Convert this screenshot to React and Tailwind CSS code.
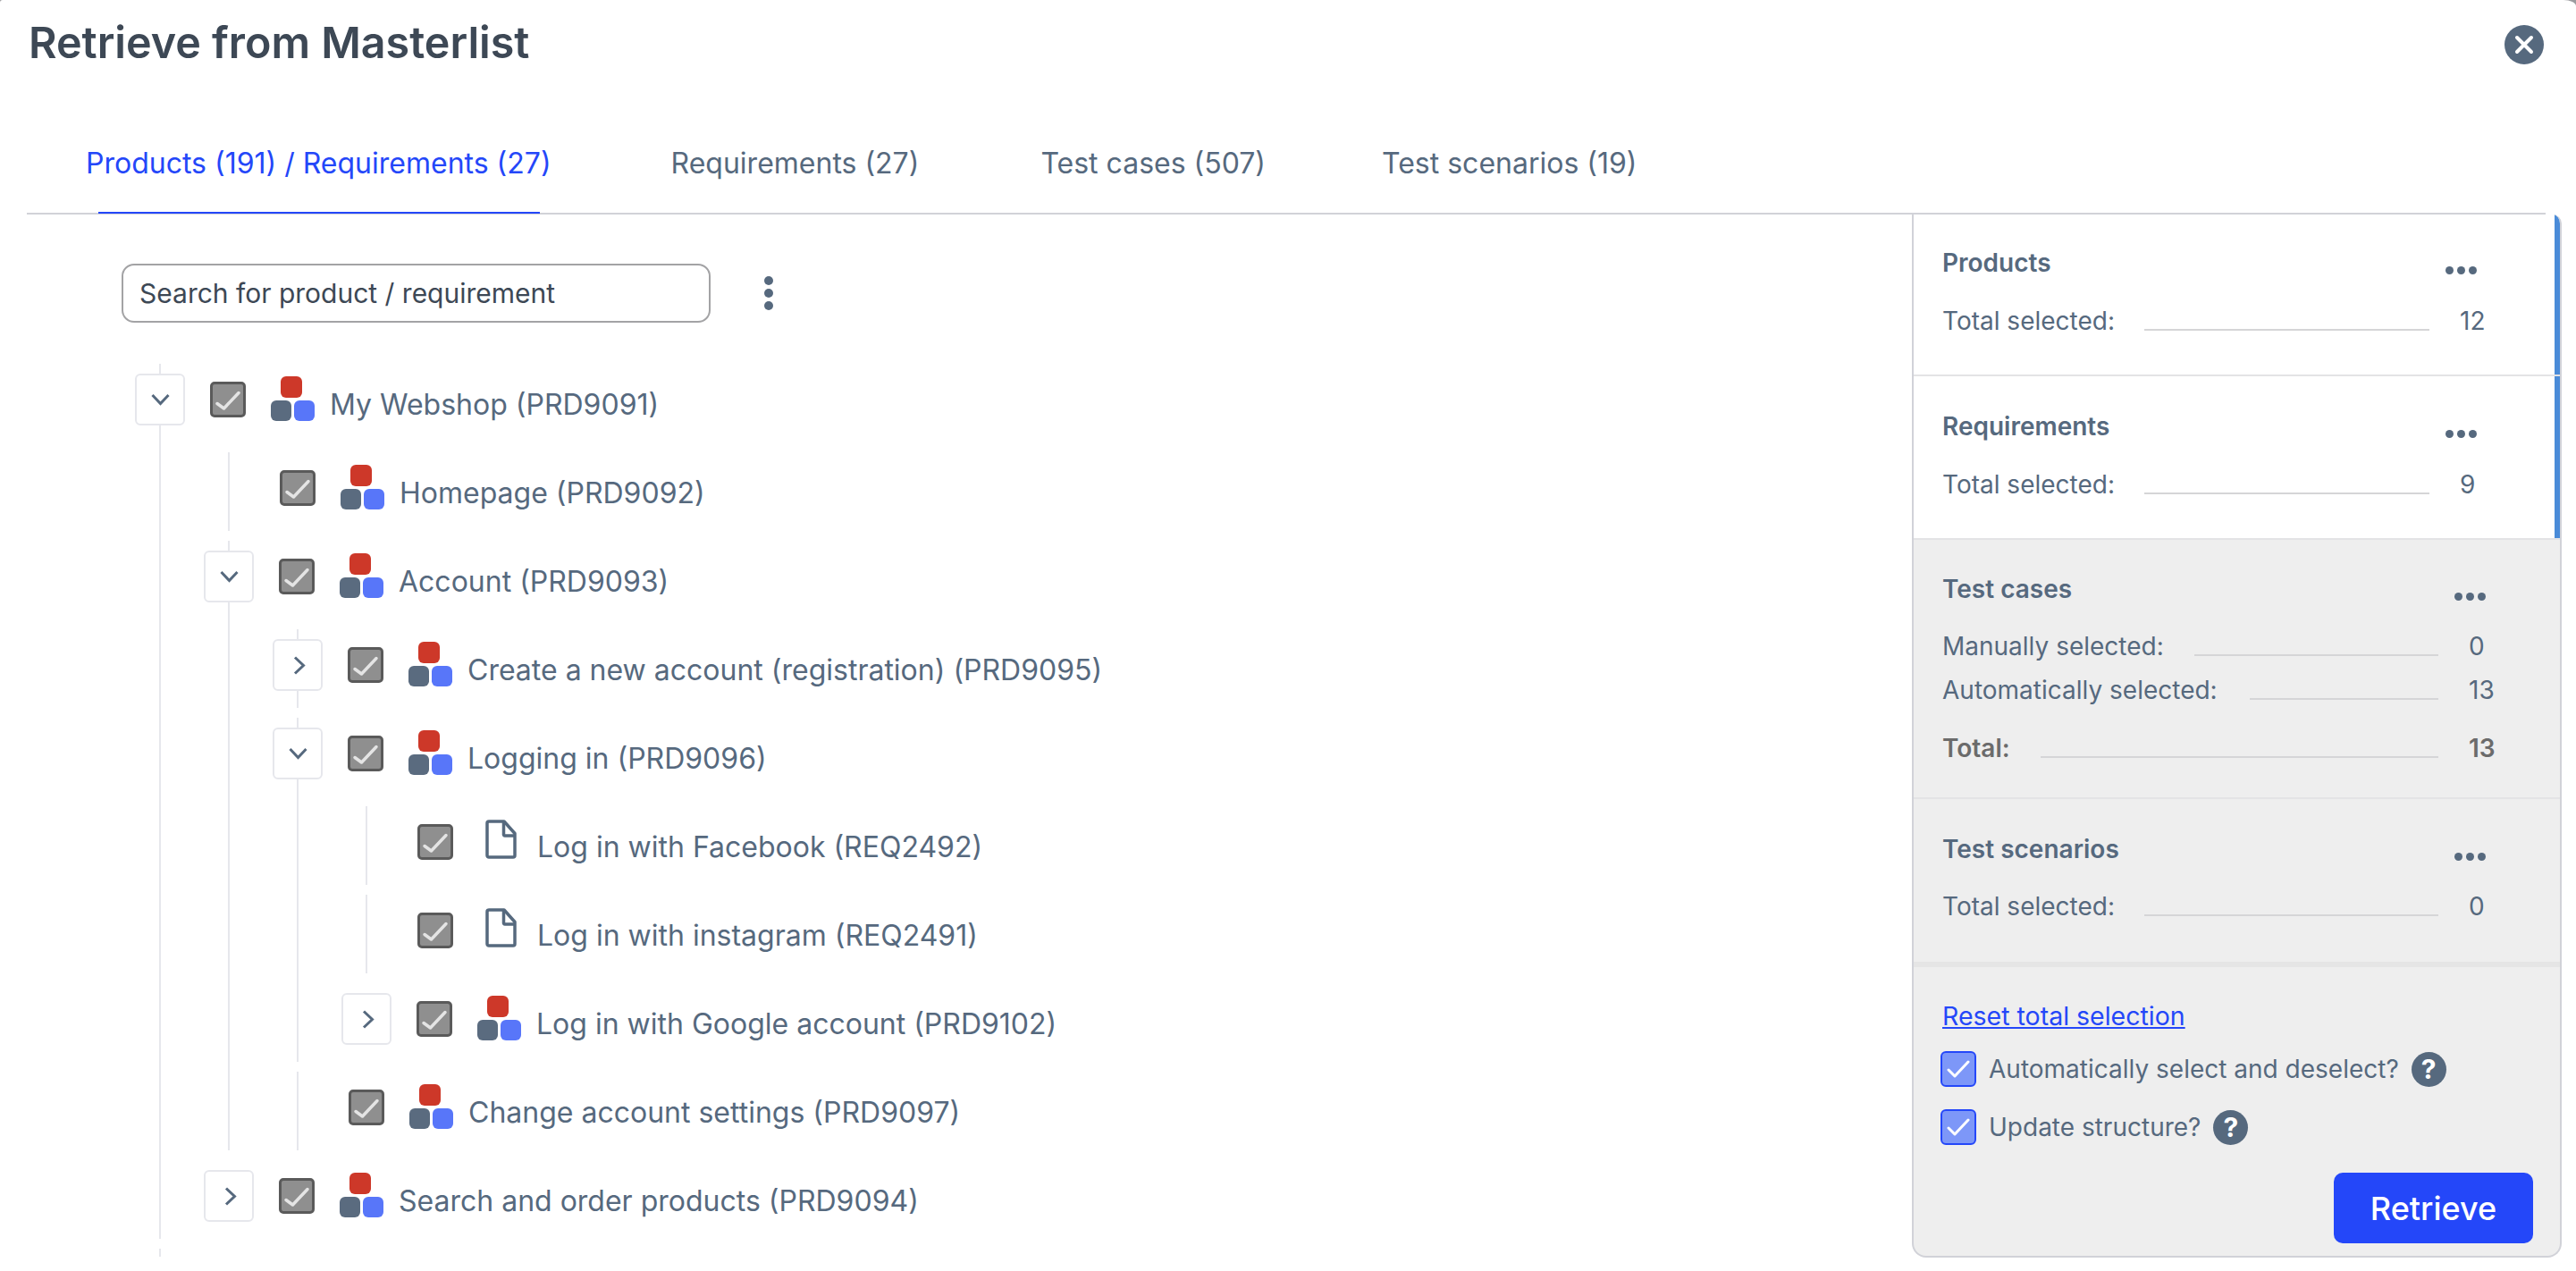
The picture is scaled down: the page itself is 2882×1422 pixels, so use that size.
const fontClass = "font-['Inter','Liberation_Sans',sans-serif]";

// product tree, same order as the masterlist
const tree = [
  {
    label: "My Webshop (PRD9091)",
    open: true,
    children: [
      { label: "Homepage (PRD9092)", leaf: true },
      {
        label: "Account (PRD9093)",
        open: true,
        children: [
          { label: "Create a new account (registration) (PRD9095)", guide: true },
          {
            label: "Logging in (PRD9096)",
            open: true,
            children: [
              { label: "Log in with Facebook (REQ2492)", leaf: true, file: true },
              { label: "Log in with instagram (REQ2491)", leaf: true, file: true },
              { label: "Log in with Google account (PRD9102)" },
            ],
          },
          { label: "Change account settings (PRD9097)", leaf: true },
        ],
      },
      { label: "Search and order products (PRD9094)" },
    ],
  },
];

const ProductIcon = () => (
  <div className="flex w-[49px] shrink-0 flex-col items-start gap-[3px] -mt-[2px]">
    <div className="ml-[11px] h-[24px] w-[24px] rounded-[6px] bg-[#cd3829]" />
    <div className="flex gap-[3px]">
      <div className="h-[23px] w-[23px] rounded-[6px] bg-[#5a6b7f]" />
      <div className="h-[23px] w-[23px] rounded-[6px] bg-[#5876f9]" />
    </div>
  </div>
);

const FileIcon = () => (
  <div className="flex w-[49px] shrink-0 justify-end pr-[6px] -mt-[6px]">
    <svg width="35" height="44" viewBox="0 0 35 44" fill="none" stroke="#56697e" strokeWidth="3.5" strokeLinejoin="round">
      <path d="M4 2h17l12 13.5V40a2 2 0 0 1-2 2H4a2 2 0 0 1-2-2V4a2 2 0 0 1 2-2z" />
      <path d="M20.5 2v14a1.5 1.5 0 0 0 1.5 2h11" />
    </svg>
  </div>
);

const GrayCheck = () => (
  <div className="flex h-[40px] w-[40px] shrink-0 items-center justify-center rounded-[5px] border-[3px] border-[#5a5a5a] bg-[#8f8f8f]">
    <svg width="34" height="34" viewBox="0 0 34 34" fill="none" stroke="#e4e4e4" strokeWidth="3.5" strokeLinecap="round" strokeLinejoin="round">
      <path d="M5 21.5l7.5 5.5L29 9.5" />
    </svg>
  </div>
);

const BlueCheck = () => (
  <div className="flex h-[40px] w-[40px] shrink-0 items-center justify-center rounded-[6px] border-2 border-[#2447f9] bg-[#7d97f8]">
    <svg width="26" height="22" viewBox="0 0 26 22" fill="none" stroke="#ffffff" strokeWidth="3" strokeLinecap="round" strokeLinejoin="round">
      <path d="M2 12l7 7L24 3" />
    </svg>
  </div>
);

const RowBody = ({ node }) => (
  <div className="flex h-[80px] items-center">
    <GrayCheck />
    <div className="ml-[28px] flex items-center">
      {node.file ? <FileIcon /> : <ProductIcon />}
      <span className="ml-[17px] whitespace-nowrap text-[32px] leading-[40px] text-[#56697e] translate-y-[6px]">{node.label}</span>
    </div>
  </div>
);

const ToggleBox = ({ open }) => (
  <div className="flex h-[58px] w-[56px] shrink-0 items-center justify-center rounded-[6px] border-2 border-[#e6e7ec] bg-white">
    {open ? (
      <svg width="21" height="14" viewBox="0 0 21 14" fill="none" stroke="#56697e" strokeWidth="3">
        <path d="M1.5 2l9 9.5 9-9.5" />
      </svg>
    ) : (
      <svg className="ml-[3px]" width="14" height="21" viewBox="0 0 14 21" fill="none" stroke="#56697e" strokeWidth="3">
        <path d="M2 1.5l9.5 9-9.5 9" />
      </svg>
    )}
  </div>
);

const TreeNode = ({ node }) => {
  // leaf rows only carry their own guide line
  if (node.leaf) {
    return (
      <div className="ml-[27px] h-[88px] border-l-2 border-[#e6e7ec] pl-[56px]">
        <RowBody node={node} />
      </div>
    );
  }

  if (!node.open) {
    return (
      <div className="flex h-[88px] items-start">
        <div className={`flex h-full w-[56px] flex-col items-center ${node.guide ? "" : "pt-[11px]"}`}>
          {node.guide && <div className="h-[11px] w-[2px] bg-[#e6e7ec]" />}
          <ToggleBox />
          {node.guide && <div className="w-[2px] flex-1 bg-[#e6e7ec]" />}
        </div>
        <div className="ml-[28px]">
          <RowBody node={node} />
        </div>
      </div>
    );
  }

  return (
    <div>
      <div className="flex h-[99px] items-start">
        <div className="flex h-full w-[56px] flex-col items-center">
          <div className="h-[11px] w-[2px] bg-[#e6e7ec]" />
          <ToggleBox open />
          <div className="w-[2px] flex-1 bg-[#e6e7ec]" />
        </div>
        <div className="ml-[28px]">
          <RowBody node={node} />
        </div>
      </div>
      <div className="ml-[27px] flex flex-col gap-[11px] border-l-2 border-[#e6e7ec] pl-[48px]">
        {node.children.map((child) => (
          <TreeNode key={child.label} node={child} />
        ))}
      </div>
    </div>
  );
};

const Dots = ({ className }) => (
  <div className={`flex gap-[4px] ${className}`}>
    <div className="h-[9px] w-[9px] rounded-full bg-[#56697e]" />
    <div className="h-[9px] w-[9px] rounded-full bg-[#56697e]" />
    <div className="h-[9px] w-[9px] rounded-full bg-[#56697e]" />
  </div>
);

const StatRow = ({ label, value, lineWidth, bold }) => (
  <div className={`flex items-end text-[28px] leading-[34px] ${bold ? "font-semibold text-[#6b6b6b]" : "text-[#56697e]"}`}>
    <span className="whitespace-nowrap">{label}</span>
    <div className="mb-[6px] ml-auto h-[2px] bg-[#d5d5d7]" style={{ width: lineWidth }} />
    <span className="w-[72px] whitespace-nowrap pl-[34px]">{value}</span>
  </div>
);

const Section = ({ title, height, accent, wide, children, top, noBorder }) => (
  <div
    className={`relative flex flex-col pl-[32px] ${wide ? "pr-[64px]" : "pr-[74px]"} ${noBorder ? "" : "border-b-2 border-[#e3e3e5]"}`}
    style={{ height, paddingTop: top }}
  >
    <div className="flex items-end justify-between">
      <span className="text-[28px] leading-[34px] font-semibold text-[#56697e]">{title}</span>
      <Dots className="mb-[4px] mr-[19px]" />
    </div>
    {children}
    {accent && <div className="absolute right-0 top-0 bottom-0 w-[6px] bg-[#4a8bd8]" />}
  </div>
);

const HelpIcon = () => (
  <div className="flex h-[39px] w-[39px] shrink-0 items-center justify-center rounded-full bg-[#56697e] text-[30px] font-bold text-white">?</div>
);

export default function App() {
  return (
    <div className={`h-[1422px] w-[2882px] overflow-hidden bg-[#9c9c9f] ${fontClass}`}>
      <div className="flex h-full flex-col rounded-tl-[3px] rounded-tr-[14px_7px] bg-white">
        <div className="flex h-[76px] items-start justify-between pl-[32px] pr-[36px] pt-[20px]">
          <h1 className="text-[48.4px] leading-[56px] font-semibold text-[#3d4855]">Retrieve from Masterlist</h1>
          <button className="mt-[8px] flex h-[44px] w-[44px] items-center justify-center rounded-full bg-[#56697e]">
            <svg width="24" height="24" viewBox="0 0 24 24" fill="none" stroke="#ffffff" strokeWidth="4" strokeLinecap="round">
              <path d="M4 4l16 16M20 4L4 20" />
            </svg>
          </button>
        </div>

        <div className="ml-[30px] mr-[34px] mt-[75px] flex h-[89px] items-start border-b-2 border-[#d1d2d8] pt-[12px]">
          <div className="relative ml-[66px] whitespace-nowrap text-[32px] leading-[40px] text-[#2447f9]">
            Products (191) / Requirements (27)
            <div className="absolute -bottom-[36px] left-[14px] right-[13px] h-[2px] bg-[#2447f9]" />
          </div>
          <div className="flex text-[32px] leading-[40px] text-[#56697e]">
            <span className="ml-[134px] whitespace-nowrap">Requirements (27)</span>
            <span className="ml-[136px] whitespace-nowrap">Test cases (507)</span>
            <span className="ml-[130px] whitespace-nowrap">Test scenarios (19)</span>
          </div>
        </div>

        <div className="flex min-h-0 flex-1 pb-[15px]">
          <div className="flex w-[2139px] shrink-0 flex-col overflow-hidden pl-[151px]">
            <div className="flex items-center">
              <div className="-ml-[15px] mt-[55px] flex h-[66px] w-[659px] items-center rounded-[14px] border-2 border-[#a3a3a5] pl-[18px] text-[30px] text-[#3d4855]">
                Search for product / requirement
              </div>
              <div className="ml-[60px] mt-[55px] flex flex-col gap-[4px]">
                <div className="h-[10px] w-[10px] rounded-full bg-[#56697e]" />
                <div className="h-[10px] w-[10px] rounded-full bg-[#56697e]" />
                <div className="h-[10px] w-[10px] rounded-full bg-[#56697e]" />
              </div>
            </div>
            <div className="mt-[46px] flex flex-col gap-[11px]">
              {tree.map((node) => (
                <TreeNode key={node.label} node={node} />
              ))}
              <div className="ml-[27px] h-[9px] w-[2px] bg-[#e6e7ec]" />
            </div>
          </div>

          <div className="flex w-[727px] flex-col overflow-hidden rounded-b-[16px] rounded-tr-[10px] border-x-2 border-b-2 border-[#d1d2d8] bg-[#eeeeee]">
            <div className="bg-white">
              <Section title="Products" height={181} accent top={37}>
                <div className="mt-[31px]">
                  <StatRow label="Total selected:" value="12" lineWidth={319} />
                </div>
              </Section>
              <Section title="Requirements" height={183} accent top={39}>
                <div className="mt-[31px]">
                  <StatRow label="Total selected:" value="9" lineWidth={319} />
                </div>
              </Section>
            </div>
            <Section title="Test cases" height={290} wide top={38}>
              <div className="mt-[30px] flex flex-col gap-[15px]">
                <StatRow label="Manually selected:" value="0" lineWidth={273} />
                <StatRow label="Automatically selected:" value="13" lineWidth={211} />
                <div className="mt-[16px]">
                  <StatRow label="Total:" value="13" lineWidth={445} bold />
                </div>
              </div>
            </Section>
            <Section title="Test scenarios" height={182} wide top={39} noBorder>
              <div className="mt-[30px]">
                <StatRow label="Total selected:" value="0" lineWidth={329} />
              </div>
            </Section>
            <div className="flex flex-1 flex-col border-t-[6px] border-[#e5e5e5] pl-[30px] pr-[30px] pt-[38px]">
              <a className="ml-[2px] w-fit text-[28.5px] leading-[34px] text-[#2447f9] underline">Reset total selection</a>
              <div className="mt-[22px] flex items-center">
                <BlueCheck />
                <span className="ml-[14px] text-[28px] leading-[34px] text-[#56697e]">Automatically select and deselect?</span>
                <div className="ml-[14px]"><HelpIcon /></div>
              </div>
              <div className="mt-[25px] flex items-center">
                <BlueCheck />
                <span className="ml-[14px] text-[28px] leading-[34px] text-[#56697e]">Update structure?</span>
                <div className="ml-[14px]"><HelpIcon /></div>
              </div>
              <div className="mt-[31px] flex justify-end">
                <button className="flex h-[79px] w-[223px] items-center justify-center rounded-[10px] bg-[#2447f9] text-[36px] font-medium text-white">Retrieve</button>
              </div>
            </div>
          </div>
        </div>
      </div>
    </div>
  );
}
